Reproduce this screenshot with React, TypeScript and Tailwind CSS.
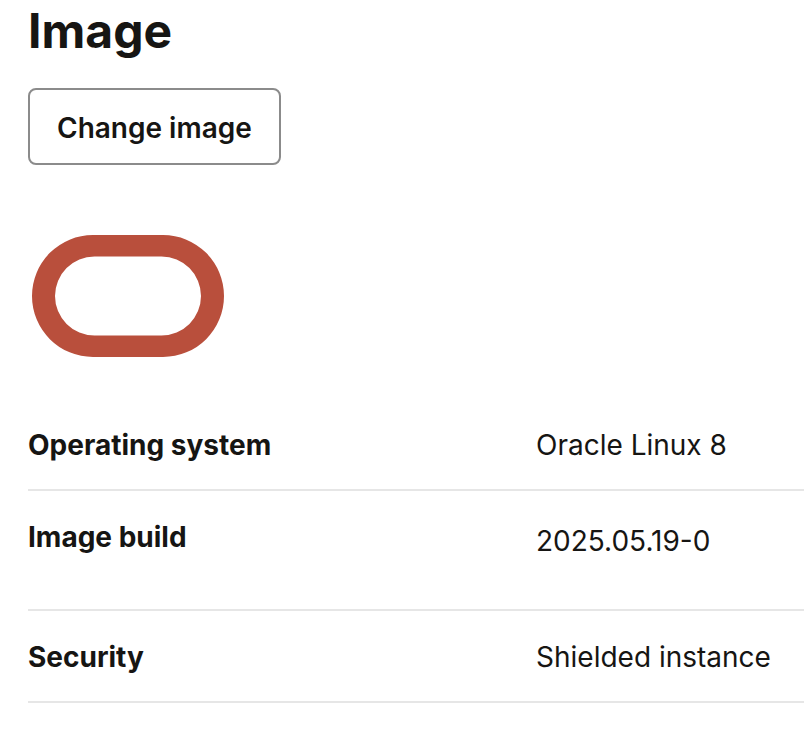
const details = [
  { label: "Operating system", value: "Oracle Linux 8" },
  { label: "Image build", value: "2025.05.19-0", tall: true },
  { label: "Security", value: "Shielded instance" },
];

const OracleLogo = () => (
  <svg
    className="block w-[194px] h-[124px]"
    viewBox="0 0 194 124"
    role="img"
    aria-label="Oracle"
  >
    <path
      fill="#b94f3c"
      fillRule="evenodd"
      d="M62 1H132A61 61 0 0 1 132 123H62A61 61 0 0 1 62 1ZM63.500 22.500A39.500 39.500 0 0 0 63.500 101.500H130.500A39.500 39.500 0 0 0 130.500 22.500Z"
    />
  </svg>
);

const App = () => {
  return (
    <main className="pl-7 pb-8 bg-white text-[#161513] font-[Inter,sans-serif]">
      <h1 className="pt-[3px] text-[48px] leading-14 font-bold">Image</h1>

      <button
        type="button"
        className="mt-[29px] h-[77px] px-[27px] pt-0.5 border-2 border-[#8b8b8b] rounded-lg text-[28px] font-semibold cursor-pointer"
      >
        Change image
      </button>

      <div className="mt-[69px] ml-[3px]">
        <OracleLogo />
      </div>

      <table className="mt-[41px] w-full table-fixed text-left text-[28px] leading-9">
        <tbody>
          {details.map(({ label, value, tall }) => (
            <tr key={label} className="border-b-2 border-[#e6e6e6] align-top">
              <th
                scope="row"
                className={`w-[508px] pt-7 font-bold ${tall ? "pb-[54px]" : "pb-[26px]"}`}
              >
                {label}
              </th>
              <td className={tall ? "pt-8" : "pt-7"}>{value}</td>
            </tr>
          ))}
        </tbody>
      </table>
    </main>
  );
};

export default App;
